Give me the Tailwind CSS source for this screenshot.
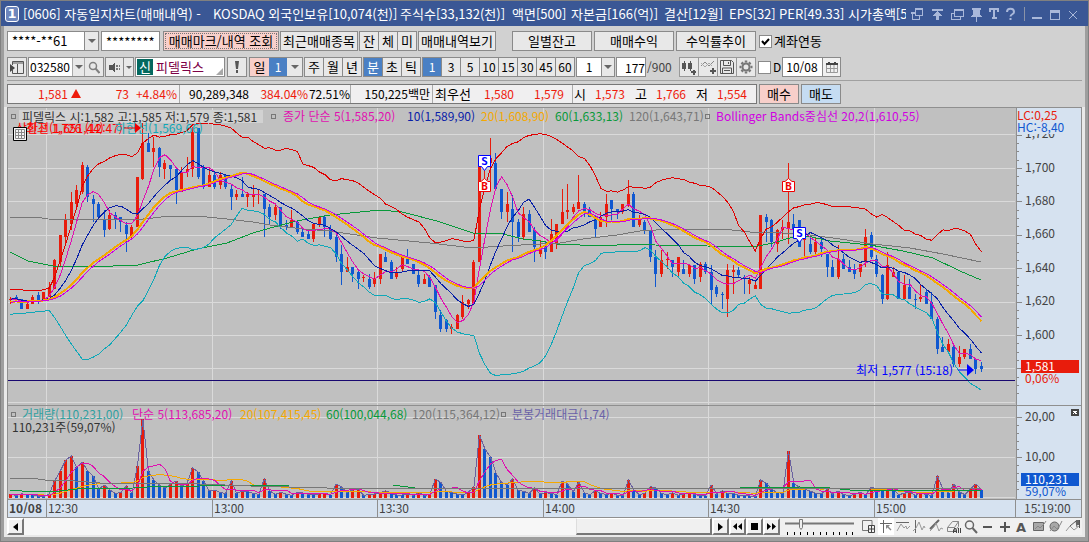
<!DOCTYPE html>
<html lang="ko">
<head>
    <meta charset="UTF-8">
    <meta name="viewport" content="width=device-width, initial-scale=1.0">
    <title>[0606] 자동일지차트(매매내역)</title>
    <script src="https://cdn.jsdelivr.net/npm/@tailwindcss/browser@4"></script>
</head>
<body class="bg-[#d1d1d1] text-black text-[12px] leading-4 font-['Noto_Sans_CJK_KR',sans-serif] whitespace-nowrap">

<div class="min-h-screen flex flex-col border border-[#808080] overflow-hidden">
    <!-- Title bar -->
    <header class="h-[25px] bg-[#3a5795] text-white text-[13px] flex items-center pl-1 pr-2 gap-1">
        <span class="w-[14px] h-4 rounded-[3px] border border-white bg-[#6d86bd] flex items-center justify-center font-bold text-[13px] font-['DejaVu_Sans']">1</span>
        <h1 class="flex-1 min-w-0 h-5 leading-5 overflow-hidden flex *:flex-none">
            <span class="w-[190px]">[0606] 자동일지차트(매매내역) -</span>
            <span class="w-[187px]">KOSDAQ 외국인보유[10,074(천)]</span>
            <span class="w-[112px]">주식수[33,132(천)]</span>
            <span class="w-[59px]">액면[500]</span>
            <span class="w-[93px]">자본금[166(억)]</span>
            <span class="w-[65px]">결산[12월]</span>
            <span class="w-[50px]">EPS[32]</span>
            <span class="w-[69px]">PER[49.33]</span>
            <span>시가총액[52</span>
        </h1>
        <svg class="flex-none" width="170" height="20" viewBox="914 3 170 20" fill="none" stroke="#a9b8da" shape-rendering="crispEdges">
            <path d="M920 12h-4v6h7v-3" stroke-width="1"/><path d="M919.500 8.500h7v6h-7z" stroke-width="1"/><path d="M919 8h8M915 12h5" stroke-width="2"/>
            <path d="M936 9h11" stroke-width="2"/><path d="M941.500 19v-6" stroke-width="3"/><path d="M936 15l5.500-5 5.500 5z" fill="#a9b8da" stroke="none"/>
            <path d="M958 12h-2.500v6.500h9v-3M958.500 8.500h9v7h-9z" stroke-width="1"/><path d="M958 9h10" stroke-width="2"/>
            <path d="M976 7h9v2h-1v4l2 3h-11l2-3v-4h-1z" fill="#a9b8da" stroke="none"/><path d="M980.500 16v5"/>
            <path d="M994 11V8h8v3M998 8v9M995.500 17h5" stroke-width="2"/>
            <path d="M1011 11c0-4.500 7-4.500 7 0 0 2.500-3.500 2-3.500 4.500M1014.500 17v2" stroke-width="2" shape-rendering="auto"/>
            <path d="M1028.500 6v14" stroke="#8a93a8"/>
            <path d="M1036 17h10" stroke-width="2"/>
            <path d="M1054.500 9.500h9v9h-9z"/><path d="M1054 10.500h10" stroke-width="3"/>
            <path d="M1073 10l8 8M1081 10l-8 8" shape-rendering="auto"/>
        </svg>
    </header>

    <div class="flex-1 flex flex-col border-x-[3px] border-b-4 border-[#9e9e9e] px-[3px]">
        <!-- Account row -->
        <div class="flex items-center mt-[5px] h-5 text-[13px]">
            <div class="flex w-[92px] h-5 border border-[#8a8a8a]">
                <input aria-label="계좌번호" value="****-**61" class="w-[76px] bg-white pl-1 outline-none">
                <button aria-label="계좌 선택" class="flex-1 bg-[#e8e8e8] border-l border-[#8a8a8a] flex items-center justify-center"><svg width="8" height="4"><path d="M0 0h8L4 4z" fill="#666"/></svg></button>
            </div>
            <input aria-label="비밀번호" value="********" class="ml-[2px] w-[59px] h-5 border border-[#8a8a8a] bg-white pl-1 outline-none">
            <button class="ml-[3px] w-[116px] h-5 border border-[#8a8a8a] bg-[#f8cfca] p-px"><span class="block h-4 border border-dotted border-[#777]"><span class="block -mt-px">매매마크/내역 조회</span></span></button>
            <button class="ml-px w-[78px] h-5 border border-[#8a8a8a] bg-[#e8e8e8]">최근매매종목</button>
            <div class="ml-px flex border border-[#8a8a8a] bg-[#e8e8e8] divide-x divide-[#8a8a8a] h-5">
                <button class="w-[19px]">잔</button><button class="w-[19px]">체</button><button class="w-[18px]">미</button>
            </div>
            <button class="ml-px w-[78px] h-5 border border-[#8a8a8a] bg-[#e8e8e8]">매매내역보기</button>
            <button class="ml-4 w-20 h-5 border border-[#8a8a8a] bg-[#e8e8e8]">일별잔고</button>
            <button class="ml-[2px] w-20 h-5 border border-[#8a8a8a] bg-[#e8e8e8]">매매수익</button>
            <button class="ml-[2px] w-20 h-5 border border-[#8a8a8a] bg-[#e8e8e8]">수익률추이</button>
            <label class="ml-[3px] flex items-center gap-[2px]">
                <span class="relative w-[13px] h-[13px]">
                    <input type="checkbox" checked class="block appearance-none w-[13px] h-[13px] border border-[#8a8a8a] bg-white">
                    <svg class="absolute left-[2px] top-[3px]" width="9" height="8" fill="none" stroke="#000" stroke-width="2"><path d="M1 3l2.500 3L8 1"/></svg>
                </span>계좌연동</label>
        </div>

        <!-- Symbol / period row -->
        <div class="flex items-center mt-[6px] h-5">
            <button aria-label="패널" class="w-5 h-5 border border-[#8a8a8a] bg-[#e8e8e8] flex items-center justify-center"><svg width="14" height="13" fill="none" stroke="#555"><path d="M2.500 4V.5h11v12h-11V9M2 2h11" /><path d="M7.500 3v9" /><path d="M0 3l5 4-5 4z" fill="#444" stroke="none"/></svg></button>
            <div class="ml-px flex w-[76px] h-5 border border-[#8a8a8a]">
                <input aria-label="종목코드" value="032580" class="w-[43px] bg-white pl-px outline-none">
                <button aria-label="종목 목록" class="w-[13px] bg-[#e8e8e8] border-x border-[#aaa] flex items-center justify-center"><svg width="8" height="4"><path d="M0 0h8L4 4z" fill="#666"/></svg></button>
                <button aria-label="검색" class="flex-1 bg-[#e8e8e8] flex items-center justify-center"><svg width="12" height="13" fill="none" stroke="#808080" stroke-width="1.500"><circle cx="5" cy="5" r="3.500"/><path d="M7.500 7.500l4 4.500" stroke-width="2"/></svg></button>
            </div>
            <div class="ml-px flex w-[29px] h-5 border border-[#8a8a8a] bg-[#e8e8e8]">
                <button aria-label="음성" class="w-[17px] flex items-center justify-center"><svg width="12" height="11" fill="#777" shape-rendering="crispEdges"><path d="M0 3h3l3-3v11l-3-3H0z" fill="#555"/><path d="M7 3h2v2H7zM7 6h2v2H7zM10 3h1v2h-1zM10 6h1v2h-1z"/></svg></button>
                <button aria-label="음성 설정" class="flex-1 border-l border-[#8a8a8a] flex items-center justify-center"><svg width="6" height="3"><path d="M0 0h6L3 3z" fill="#666"/></svg></button>
            </div>
            <div class="ml-px relative flex items-center w-[90px] h-5 border border-[#8a8a8a] bg-white text-[13px] text-[#7d0046]">
                <span class="w-4 h-4 ml-px bg-[#04695f] text-white text-center">신</span><span class="ml-[3px]">피델릭스</span>
                <svg class="absolute right-px bottom-px" width="7" height="7"><path d="M7 0v7H0z" fill="#a8a8a8"/></svg>
            </div>
            <button aria-label="알림" class="ml-[2px] w-5 h-5 border border-[#8a8a8a] bg-[#e8e8e8] flex items-center justify-center"><svg width="4" height="12" fill="#555"><path d="M0 0h4l-1 8H1zM1 9h2v3H1z"/></svg></button>
            <div class="ml-[2px] flex w-[54px] h-5 border border-[#8a8a8a]">
                <button class="w-[19px] bg-[#f8cfca] text-[13px]">일</button><button class="w-[18px] bg-[#4a80c4] text-white">1</button>
                <button aria-label="일 주기" class="flex-1 bg-[#e8e8e8] flex items-center justify-center"><svg width="8" height="4"><path d="M0 0h8L4 4z" fill="#666"/></svg></button>
            </div>
            <div class="ml-px flex h-5 text-[13px] border border-[#8a8a8a] bg-[#e8e8e8] divide-x divide-[#8a8a8a]">
                <button class="w-[19px]">주</button><button class="w-[19px]">월</button><button class="w-[18px]">년</button>
            </div>
            <div class="ml-px flex h-5 text-[13px] border border-[#8a8a8a] bg-[#e8e8e8] divide-x divide-[#8a8a8a]">
                <button class="w-[19px] bg-[#4a80c4] text-white">분</button><button class="w-[19px]">초</button><button class="w-[18px]">틱</button>
            </div>
            <div class="ml-px flex flex-none w-[153px] h-5 border border-[#8a8a8a] bg-[#e8e8e8] divide-x divide-[#8a8a8a] *:flex-1">
                <button class="bg-[#4a80c4] text-white">1</button><button>3</button><button>5</button><button>10</button><button>15</button><button>30</button><button>45</button><button>60</button>
            </div>
            <div class="ml-px flex w-[39px] h-5 border border-[#8a8a8a]">
                <input aria-label="분 주기" value="1" class="w-6 bg-white text-center outline-none">
                <button aria-label="분 주기 목록" class="flex-1 bg-[#e8e8e8] border-l border-[#8a8a8a] flex items-center justify-center"><svg width="8" height="4"><path d="M0 0h8L4 4z" fill="#666"/></svg></button>
            </div>
            <input aria-label="조회 개수" value="177" class="ml-px w-[30px] h-5 border border-[#8a8a8a] bg-white text-right outline-none">
            <span class="ml-px w-8 text-[#444]">/900</span>
            <div class="flex w-[77px] h-5 border border-[#999] bg-[#e8e8e8] divide-x divide-[#999] *:flex-1 *:flex *:items-center *:justify-center">
                <button aria-label="차트 추가"><svg width="15" height="15" fill="#555" shape-rendering="crispEdges"><path d="M0 3h4v6H0zM6 3h4v6H6z"/><path d="M2 1v10M8 1v10" stroke="#555"/><path d="M9 12h5M11.500 9.500v5" stroke="#555" stroke-width="2"/></svg></button>
                <button aria-label="지표 추가"><svg width="15" height="14" fill="none" stroke="#888"><path d="M0 6l4-4 4 4 5-5"/><path d="M0 3l4 4 4-4 3 3" stroke="#aaa"/><path d="M9 11h6M12 8v6" stroke="#555" stroke-width="2"/></svg></button>
                <button aria-label="저장"><svg width="14" height="14" fill="none" stroke="#555"><path d="M.5.500h11l2 2v11H.5z"/><path d="M3.500.500v5h7v-5M2.500 13v-5h9v5M4 10.500h6M8.500 2v2"/></svg></button>
                <button aria-label="설정"><svg width="14" height="14" viewBox="-7 -7 14 14" fill="none" stroke="#777"><circle r="3.500" stroke-width="2"/><path d="M0-6.500v2M0 4.500v2M-6.500 0h2M4.500 0h2M-4.500-4.500l1.500 1.500M3 3l1.500 1.500M-4.500 4.500l1.500-1.500M3-3l1.500-1.500" stroke-width="2.500"/></svg></button>
            </div>
            <label class="ml-[2px] flex items-center gap-[2px]"><input type="checkbox" class="block appearance-none w-[13px] h-[13px] border border-[#8a8a8a] bg-white">D</label>
            <div class="ml-px flex w-[59px] h-5 border border-[#8a8a8a]">
                <input aria-label="날짜" value="10/08" class="w-[39px] bg-white pl-[3px] outline-none">
                <button aria-label="달력" class="flex-1 bg-[#f0f0f0] border-l border-[#8a8a8a] flex items-center justify-center"><svg width="12" height="11" fill="none" stroke="#999"><path d="M.5 2.500h11v8H.5zM4.500 3v7M8 3v7M1 6.500h10"/><path d="M0 2h12M3 0v3M9 0v3" stroke="#444" stroke-width="2"/></svg></button>
            </div>
        </div>

        <!-- Quote strip -->
        <div class="mt-[3px] pt-[3px] border-t border-[#a0a0a0] flex gap-[2px] h-[27px]">
            <div class="flex h-5 leading-[18px] w-[750px] border border-[#777] bg-[#f0eff0] text-[#ee1c0c] divide-x divide-[#aaa]">
                <div class="flex w-[172px] pl-[30px]">
                    <span class="w-[33px]">1,581</span><svg class="mt-1" width="10" height="9"><path d="M5 0l5 9H0z" fill="#ee1c0c"/></svg>
                    <span class="w-[48px] text-right">73</span><span class="flex-1 text-right pr-[2px]">+4.84%</span>
                </div>
                <div class="flex w-[171px] pl-[9px]">
                    <span class="w-[72px] text-black">90,289,348</span><span class="w-[49px]">384.04%</span><span class="text-black">72.51%</span>
                </div>
                <div class="w-[82px] text-right pr-[2px] text-black">150,225백만</div>
                <div class="flex w-[140px] pl-[2px]"><span class="w-[49px] text-[13px] text-black">최우선</span><span class="w-[50px]">1,580</span><span>1,579</span></div>
                <div class="flex pl-px"><span class="w-[21px] text-[13px] text-black">시</span><span class="w-10">1,573</span><span class="w-[21px] text-[13px] text-black">고</span><span class="w-10">1,766</span><span class="w-[21px] text-[13px] text-black">저</span><span>1,554</span></div>
            </div>
            <button class="w-10 h-5 text-[13px] border border-[#8a8a8a] bg-[#f8cfca]">매수</button>
            <button class="w-10 h-5 text-[13px] border border-[#8a8a8a] bg-[#c5dcf2]">매도</button>
        </div>

        <div class="flex-1 -mx-[3px] px-[3px] pb-[2px] bg-[#e9e9e9]">
            <!-- Chart -->
            <div class="flex h-[392px] border-l border-t border-[#8f8f8f]">
                <div class="relative flex-1 bg-[#c0c0c0] overflow-hidden">
                    <svg id="plot" class="block w-full h-[391px]" viewBox="8 108 1008 391" preserveAspectRatio="none" shape-rendering="crispEdges"></svg>
                    <div class="absolute left-0 top-0 h-4 flex items-center">
                        <i class="w-[5px] h-[5px] ml-[3px] mr-[3px] border border-[#777]"></i>
                        <span class="w-[244px] h-[13px] leading-[13px] pl-[3px] bg-[#d2d2d2] text-[#333]">피델릭스 시:1,582 고:1,585 저:1,579 종:1,581</span>
                        <i class="w-[5px] h-[5px] ml-2 mr-[7px] border border-[#777]"></i>
                        <span class="w-[124px] text-[#e010b0]">종가 단순 5(1,585,20)</span>
                        <span class="w-[74px] text-[#0820a8]">10(1,589,90)</span>
                        <span class="w-[74px] text-[#f5a800]">20(1,608,90)</span>
                        <span class="w-[74px] text-[#08993a]">60(1,633,13)</span>
                        <span class="w-[76px] text-[#777]">120(1,643,71)</span>
                        <i class="w-[5px] h-[5px] mr-[6px] border border-[#777]"></i>
                        <span class="text-[#d000e0]">Bollinger Bands중심선 20,2(1,610,55)</span>
                    </div>
                    <span class="absolute left-2 top-3 text-[#f00]">상한선(1,651,44)</span>
                    <span class="absolute left-[18px] top-3 text-[#f00]">최고 1,726 (12:47)</span>
                    <span class="absolute left-[107px] top-3 text-[#10a8b8]">하한선(1,569,66)</span>
                    <svg class="absolute left-[116px] top-[15px]" width="18" height="10"><path d="M0 5h12" stroke="#e00"/><path d="M11 0l6 5-6 5z" fill="#e00"/></svg>
                    <svg class="absolute left-[5px] top-[19px]" width="14" height="14"><path d="M.5.500h13v13H.5z" fill="#f4f4f4" stroke="#000"/><path d="M2.500 2.500h9v9h-9zM5.500 3v8M8.500 3v8M3 5.500h8M3 8.500h8" fill="none" stroke="#888"/></svg>
                    <div class="absolute right-[42px] top-[254px] flex items-center gap-[5px] text-[#00f]">최저 1,577 (15:18)
                        <svg width="16" height="12"><path d="M0 6h9" stroke="#00f"/><path d="M9 0l7 6-7 6z" fill="#00f"/></svg>
                    </div>
                    <div class="absolute left-0 top-[298px] h-4 flex items-center">
                        <i class="w-[5px] h-[5px] ml-[3px] mr-[6px] border border-[#777]"></i>
                        <span class="w-[110px] text-[#30a0a0]">거래량(110,231,00)</span>
                        <span class="w-[108px] text-[#e010b0]">단순 5(113,685,20)</span>
                        <span class="w-[86px] text-[#f5a800]">20(107,415,45)</span>
                        <span class="w-[86px] text-[#08993a]">60(100,044,68)</span>
                        <span class="w-[89px] text-[#777]">120(115,364,12)</span>
                        <i class="w-[5px] h-[5px] mr-[6px] border border-[#777]"></i>
                        <span class="text-[#6a62a8]">분봉거래대금(1,74)</span>
                    </div>
                    <span class="absolute left-1 top-[311px] text-[#333]">110,231주(59,07%)</span>
                </div>
                <div class="w-[66px] border-x border-[#8f8f8f]">
                    <svg id="axis" class="block bg-[#d6e2f0]" width="64" height="391" viewBox="1017 108 64 391" shape-rendering="crispEdges"></svg>
                </div>
            </div>

            <!-- Time axis -->
            <div class="flex h-[19px] leading-4 border border-[#8f8f8f] bg-[#d6e2f0] text-[#444]">
                <b class="w-[38px] pl-px">10/08</b>
                <div class="flex-1 flex *:border-l *:border-[#8f8f8f] *:pl-px">
                    <span class="w-[166px]">12:30</span><span class="w-[165px]">13:00</span><span class="w-[166px]">13:30</span><span class="w-[165px]">14:00</span><span class="w-[166px]">14:30</span><span class="flex-1">15:00</span>
                </div>
                <span class="w-[66px] border-l border-[#8f8f8f] pl-2">15:19:00</span>
            </div>

            <!-- Scroll bar and drawing tools -->
            <div class="flex h-[17px]">
                <button aria-label="왼쪽으로" class="w-[17px] bg-[#f0f0f0] border-2 border-t-white border-l-white border-b-[#777] border-r-[#777] flex items-center justify-center"><svg width="5" height="8"><path d="M5 0v8L0 4z"/></svg></button>
                <div class="flex-1 bg-[#f7f7f7] flex justify-end"><div class="w-[136px] bg-[#f0f0f0] border border-b-2 border-r-2 border-l-[#ddd] border-t-white border-b-[#777] border-r-[#777]"></div></div>
                <div class="flex *:w-[17px] *:bg-[#f0f0f0] *:border-2 *:border-t-white *:border-l-white *:border-b-[#777] *:border-r-[#777] *:flex *:items-center *:justify-center">
                    <button aria-label="오른쪽으로"><svg width="5" height="8"><path d="M0 0v8l5-4z"/></svg></button>
                    <button aria-label="빠르게 뒤로"><svg width="9" height="7"><path d="M4 0v7L0 3.500zM9 0v7L5 3.500z"/></svg></button>
                    <button aria-label="정지"><svg width="7" height="7"><path d="M0 0h7v7H0z"/></svg></button>
                    <button aria-label="빠르게 앞으로"><svg width="9" height="7"><path d="M0 0v7l4-3.500zM5 0v7l4-3.500z"/></svg></button>
                </div>
                <svg class="bg-[#f0f0f0]" width="302" height="17" viewBox="781 518 302 17" fill="none" stroke="#777">
                    <path d="M786 523.500h69" stroke-width="2"/><path d="M800.500 519.500h3v8l-1.500 2-1.500-2z" fill="#eee"/>
                    <path d="M788.500 532v3M795.500 532v3M801.500 532v3M808.500 532v3M814.500 532v3M821.500 532v3M827.500 532v3M834.500 532v3M840.500 532v3M847.500 532v3M853.500 532v3" stroke="#000"/>
                    <path d="M869 530.500h-5.500v-10h9.500v4.500"/><path d="M869.500 525.500h6v7h-6zM872.500 526v6M870 529h5" stroke="#444"/>
                    <path d="M879 518h16v17h-16z" fill="#fff" stroke="none"/><path d="M884.500 520v13M881 523.500h12" stroke="#666"/><path d="M887 525h4l-1.500 1.500 3 3-1 1-3-3L887 529z" fill="#888" stroke="none"/>
                    <path d="M897 522.500h13" stroke="#666"/><path d="M898 531l4-7 3 4 2-2 1 3 3-3" stroke="#999"/>
                    <path d="M916.500 520v13" stroke="#666"/><path d="M914 531l3-3 3-6 3 8 2-4 1 2" stroke="#999"/>
                    <path d="M931 529l9-9" stroke="#666" stroke-width="2"/><path d="M931 531l4-4 2-4 3 8 2-3 2 1" stroke="#999"/>
                    <path d="M948.500 527.500l5-6h6l-4 6zM948.500 527.500v4h7v-4M955.500 531.500l4-5v-5" stroke="#888"/><path d="M954.500 533v-3l1.500-2 1.500 2v3M955 531.500h3M959.500 528v5M961.500 528v5" stroke="#444"/>
                    <circle cx="970.500" cy="525" r="4" stroke="#666" stroke-width="1.500"/><path d="M973.500 528l4.500 5" stroke="#666" stroke-width="2"/>
                    <path d="M984 527h9M1001 527h10M1006 522v10" stroke="#555" stroke-width="2"/>
                    <text x="1022" y="532" text-anchor="middle" font-size="13" font-weight="bold" font-family="DejaVu Sans" fill="#555" stroke="none">A</text>
                    <path d="M1034.500 522.500h10v8h-10z" fill="#a8a8a8" stroke="#666"/><path d="M1036 529l3-3 2 2 4-4 2-3" stroke="#888"/>
                    <circle cx="1055.500" cy="526.500" r="4.500" fill="#a8a8a8" stroke="#666"/><path d="M1051 531l4-5 3 3 3-4 2-4" stroke="#888"/>
                    <path d="M1067 531l4-5 4 4 5-4" stroke="#999"/><path d="M1071 526l6-5 1 6" stroke="#555"/><path d="M1080.500 520v8" stroke="#555"/><path d="M1077 520h3v5h-3z" fill="#666" stroke="none"/>
                </svg>
            </div>
        </div>
    </div>
</div>

<script>
    // one bar per minute: direction, high, body top, body bottom, low
    const bars = `r1623 1622 1621 1619,b1624 1623 1622 1620,b1622 1622 1616 1616,r1621 1619 1616 1616,r1624 1623 1619 1619,b1626 1624 1621 1619,r1626 1626 1621 1621,r1632 1629 1623 1623,r1646 1645 1628 1628,r1660 1660 1644 1641,
r1673 1669 1659 1654,r1686 1680 1667 1663,r1690 1687 1679 1677,r1704 1702 1686 1685,b1702 1701 1683 1680,b1684 1682 1679 1668,b1680 1679 1671 1671,b1675 1670 1663 1659,r1675 1672 1664 1663,b1674 1672 1670 1664,
b1671 1671 1668 1662,b1668 1666 1661 1650,r1666 1665 1659 1657,r1695 1695 1665 1665,r1727 1715 1694 1693,b1721 1715 1710 1710,r1719 1712 1710 1701,b1713 1712 1701 1695,r1705 1703 1700 1694,b1702 1702 1700 1693,
b1700 1700 1687 1679,r1701 1698 1686 1686,r1707 1700 1698 1695,r1725 1722 1700 1695,b1724 1724 1695 1694,b1702 1701 1689 1688,r1700 1696 1689 1689,b1698 1696 1689 1688,r1698 1696 1690 1688,b1697 1696 1689 1688,
b1691 1688 1683 1675,r1687 1685 1683 1681,b1695 1685 1683 1683,r1686 1685 1683 1677,r1690 1685 1683 1677,r1687 1685 1684 1679,b1685 1685 1676 1659,b1679 1677 1671 1667,r1678 1677 1672 1669,b1677 1677 1666 1664,
b1669 1666 1665 1663,r1675 1669 1665 1665,b1669 1668 1662 1661,b1665 1662 1659 1659,b1663 1661 1658 1658,r1667 1667 1658 1656,r1671 1671 1667 1665,b1672 1671 1665 1659,b1666 1664 1658 1657,b1660 1659 1647 1644,
b1654 1649 1638 1630,r1647 1641 1638 1638,b1641 1641 1637 1632,b1639 1638 1634 1628,r1636 1635 1635 1632,b1637 1634 1629 1628,r1638 1634 1631 1629,r1649 1649 1634 1631,b1650 1647 1644 1644,b1645 1644 1634 1634,
r1641 1638 1635 1634,r1648 1647 1640 1638,b1652 1647 1643 1643,b1643 1643 1637 1637,b1639 1636 1631 1629,r1637 1634 1631 1631,b1636 1635 1629 1629,b1630 1630 1614 1610,b1615 1612 1604 1602,b1610 1609 1604 1602,
r1607 1605 1604 1601,r1613 1612 1604 1604,r1624 1620 1611 1610,r1622 1621 1619 1616,r1645 1644 1619 1619,r1705 1702 1644 1644,r1707 1705 1702 1690,r1718 1706 1703 1692,b1709 1703 1688 1687,b1688 1688 1674 1670,
r1686 1679 1674 1668,b1684 1676 1668 1650,b1670 1668 1659 1656,r1677 1673 1659 1658,b1675 1673 1662 1662,b1665 1663 1653 1644,r1657 1652 1649 1647,b1656 1653 1650 1646,r1670 1661 1650 1650,r1667 1667 1655 1652,
r1688 1674 1667 1667,r1691 1675 1674 1670,r1679 1677 1674 1673,r1696 1680 1676 1676,b1680 1679 1674 1671,b1677 1675 1671 1671,b1672 1671 1664 1659,r1674 1671 1665 1665,r1685 1679 1671 1665,b1681 1681 1676 1668,
b1676 1676 1674 1670,r1679 1679 1674 1673,r1693 1685 1679 1677,b1686 1685 1665 1665,r1672 1669 1666 1665,b1669 1668 1663 1661,b1663 1663 1647 1644,b1651 1647 1637 1629,r1651 1645 1637 1635,r1650 1646 1645 1640,
b1645 1645 1641 1635,r1647 1647 1638 1635,b1645 1640 1637 1637,r1643 1642 1637 1635,b1642 1642 1634 1631,r1644 1643 1635 1632,b1644 1643 1638 1637,b1642 1638 1627 1619,b1630 1629 1625 1623,b1626 1625 1625 1616,
r1643 1639 1622 1611,r1642 1639 1638 1625,b1641 1639 1636 1635,b1636 1635 1634 1625,r1635 1633 1631 1625,r1632 1630 1628 1628,r1672 1672 1628 1628,b1673 1671 1668 1656,b1670 1669 1656 1653,r1664 1663 1655 1650,
r1669 1665 1663 1658,r1703 1668 1664 1655,b1673 1667 1664 1659,b1669 1669 1653 1653,r1659 1658 1657 1647,b1659 1655 1650 1649,r1659 1656 1650 1649,b1659 1656 1652 1647,b1649 1649 1641 1635,b1645 1641 1635 1635,
r1654 1646 1635 1634,b1649 1646 1640 1640,b1645 1641 1638 1638,b1643 1639 1637 1634,r1643 1643 1638 1635,r1664 1659 1644 1641,b1662 1660 1647 1646,b1648 1646 1637 1635,b1637 1636 1622 1619,r1650 1642 1622 1621,
r1641 1638 1635 1635,b1638 1638 1622 1622,r1636 1630 1622 1622,b1634 1629 1622 1622,b1625 1622 1622 1616,r1630 1623 1622 1620,b1627 1626 1619 1619,b1626 1620 1610 1610,b1611 1610 1592 1589,b1599 1593 1590 1590,
r1598 1595 1590 1589,b1595 1593 1583 1581,r1594 1587 1583 1581,r1592 1592 1587 1586,b1595 1592 1586 1586,b1586 1586 1580 1577,b1584 1582 1580 1578`
        .split(',').map(s => { s = s.trim(); return [s[0], ...s.slice(1).split(' ').map(Number)]; });

    const volumes = [12,7,13,10,9,6,4,11,51,81,114,126,92,108,81,66,27,39,24,14,16,36,15,96,237,81,54,39,30,42,51,36,44,91,78,51,21,24,16,14,
        51,14,21,19,14,11,57,21,11,17,11,8,18,15,11,9,12,14,10,42,33,17,24,27,8,10,12,16,22,14,9,9,12,8,16,8,10,57,47,20,
        16,12,9,18,32,189,147,123,75,47,39,57,24,20,14,30,12,16,14,10,51,42,18,48,16,10,22,14,10,14,8,6,54,24,10,14,34,30,14,10,
        16,8,12,16,10,8,6,39,12,22,14,14,8,8,6,6,54,44,26,16,14,141,46,30,26,20,14,12,27,12,21,10,8,10,18,10,33,27,22,30,
        27,10,14,18,8,16,10,8,66,27,16,42,18,10,28,42,24];

    const X = i => 10.5 + 5.517 * i;
    const Y = p => 168.5 + (1700 - p) * 1.67;
    const V = v => 498 - v / 3;
    const line = (pts, color, w = 1) => `<polyline points="${pts.map(p => p[0].toFixed(1) + ',' + p[1].toFixed(1)).join(' ')}" fill="none" stroke="${color}" stroke-width="${w}"/>`;
    const seg = (x1, y1, x2, y2, color, w = 1) => `<path d="M${x1} ${y1}L${x2} ${y2}" stroke="${color}" stroke-width="${w}"/>`;
    const track = (s, color) => `<polyline points="${s}" fill="none" stroke="${color}"/>`;

    // simple moving average and deviation, with values from before the visible range
    function average(values, n, before) {
        const all = before.concat(values);
        return values.map((_, i) => {
            const part = all.slice(i + before.length - n + 1, i + before.length + 1);
            const mean = part.reduce((a, b) => a + b, 0) / n;
            return { mean, dev: Math.sqrt(part.reduce((a, b) => a + (b - mean) ** 2, 0) / n) };
        });
    }

    const closes = bars.map(b => b[0] === 'r' ? b[2] : b[3]);
    const before = Array.from({ length: 20 }, (_, i) => i < 10 ? (i % 2 ? 1614 : 1622) : (i % 2 ? 1620 : 1624));
    const ma5 = average(closes, 5, before);
    const ma10 = average(closes, 10, before);
    const ma20 = average(closes, 20, before);
    const volBefore = Array(20).fill(9);
    const vol5 = average(volumes, 5, volBefore);
    const vol20 = average(volumes, 20, volBefore);

    let out = '';
    const gridX = [46.5, 212.5, 377.5, 543.5, 708.5, 874.5];
    gridX.forEach(x => out += seg(x, 108, x, 498, '#dadada'));
    [134.5, 168.5, 201.5, 235.5, 268.5, 302.5, 335.5, 368.5, 402.5, 417.5, 457.5, 497.5].forEach(y => out += seg(8, y, 1015, y, '#dadada'));
    out += seg(8, 405.5, 1016, 405.5, '#8f8f8f');

    bars.forEach(([dir, high, top, bottom, low], i) => {
        const x = Math.floor(X(i));
        const color = dir === 'r' ? '#e81c0c' : '#1058d0';
        out += `<rect x="${x}" y="${Y(high)}" width="1" height="${Math.max(1, Y(low) - Y(high))}" fill="${color}"/>`;
        out += `<rect x="${x - 1}" y="${Y(top)}" width="3" height="${Math.max(1, Y(bottom) - Y(top))}" fill="${color}"/>`;
    });

    out += track('10,252 28,261 53,266 113,266 138,265 167,258 197,249 227,243 253,233 270,228 297,221 330,215 380,210 402,212 437,221 473,233 503,234 523,239 540,241 557,244 580,245 617,245 640,244 655,245 707,246 753,247 773,243 793,237 807,236 830,241 870,245 903,251 933,258 960,271 981,280', '#08993a');
    out += track('10,218 20,217 35,217 48,219 133,220 153,218 170,216 197,216 227,219 253,222 270,225 303,229 330,231 377,238 430,243 473,248 503,246 540,244 560,243 583,239 617,235 640,231 673,229 723,229 750,232 783,233 810,235 840,239 873,244 910,248 943,254 981,262', '#777');
    out += line(ma5.map((m, i) => [X(i), Y(m.mean)]), '#e010b0');
    out += line(ma10.map((m, i) => [X(i), Y(m.mean)]), '#0820a8');
    out += line(ma20.map((m, i) => [X(i), Y(m.mean)]), '#f5a800', 2);
    out += line(ma20.map((m, i) => [X(i), Y(.3 * m.mean + .7 * ma20[Math.max(0, i - 1)].mean)]), '#d000e0');
    out += line(ma20.map((m, i) => [X(i), Y(m.mean + 2 * m.dev)]), '#e00000');
    out += line(ma20.map((m, i) => [X(i), Y(m.mean - 2 * m.dev)]), '#10a8b8');
    out += seg(8, 380.5, 1015, 380.5, '#180870');

    // buy and sell marks
    const mark = (x, y, letter, color, shape) => `<path d="${shape}" transform="translate(${x} ${y})" fill="#fff" stroke="${color}" shape-rendering="auto"/><text x="${x + 6.5}" y="${y + (letter === 'B' ? 12 : 10)}" text-anchor="middle" font-size="11" font-weight="bold" font-family="DejaVu Sans Mono" fill="${color}">${letter}</text>`;
    const sell = 'M.5.500h12v11h-3l-3 4-3-4h-3z', buy = 'M.5 13.500h12v-10h-2.500l-3.500-3-3.500 3H.5z';
    out += mark(478, 155, 'S', '#0000ff', sell) + mark(478, 178, 'B', '#f00000', buy);
    out += mark(782, 178, 'B', '#f00000', buy) + mark(793, 227, 'S', '#0000ff', sell);

    volumes.forEach((v, i) => {
        const up = i === 0 || v > volumes[i - 1];
        out += `<rect x="${Math.floor(X(i)) - 1}" y="${V(v)}" width="3" height="${v / 3}" fill="${up ? '#e81c0c' : '#1058d0'}"/>`;
    });
    out += line(volumes.map((v, i) => [X(i), V(v)]), '#6a62a0');
    out += line(vol20.map((m, i) => [X(i), V(m.mean)]), '#f5a800');
    out += line(vol5.map((m, i) => [X(i), V(m.mean)]), '#e010b0');
    out += track('10,490 22,491 60,491 77,489 133,488 147,487 200,486 290,485 393,485 415,488 740,488 800,487 830,488 850,490 981,490', '#08993a');
    out += track('10,478 30,478 45,480 75,481 100,483 150,483 200,484 250,486 327,488 740,488 981,489', '#777');
    document.getElementById('plot').innerHTML = out;

    // price and volume scale
    let axis = '';
    const label = (x, y, text, color) => `<text x="${x}" y="${y}" font-size="12" fill="${color}">${text}</text>`;
    for (let p = 1725; p > 1562; p -= 5) axis += seg(1017, Math.floor(Y(p)) + .5, p % 20 ? 1019 : 1022, Math.floor(Y(p)) + .5, '#888');
    for (let k = 0; k < 10; k++) axis += seg(1017, 417.5 + 8 * k, k % 5 ? 1019 : 1022, 417.5 + 8 * k, '#888');
    axis += label(1025, 138, '1,720', '#444') + '<path d="M1017 108h64v26h-64z" fill="#d6e2f0"/>';
    [1700, 1680, 1660, 1640, 1620, 1600].forEach(p => axis += label(1025, Math.round(Y(p)) + 3, p.toLocaleString('en'), '#444'));
    axis += label(1017, 120, 'LC:0,25', '#e81c0c') + label(1017, 132, 'HC:-8,40', '#1058d0');
    axis += '<path d="M1021 360h58v13h-58z" fill="#e81c0c"/>' + label(1025, 371, '1,581', '#fff') + label(1025, 383, '0,06%', '#e81c0c');
    axis += seg(1017, 405.5, 1081, 405.5, '#8f8f8f');
    axis += label(1025, 421, '20,00', '#444') + label(1025, 461, '10,00', '#444');
    axis += '<path d="M1021 473h58v13h-58z" fill="#1058d0"/>' + label(1025, 484, '110,231', '#fff') + label(1025, 496, '59,07%', '#1058d0');
    axis += '<path d="M1071 409h8v7h-8z" fill="#444"/><path d="M1073 411l4 3M1077 411l-4 3" stroke="#fff"/>';
    document.getElementById('axis').innerHTML = axis;
</script>
</body>
</html>
